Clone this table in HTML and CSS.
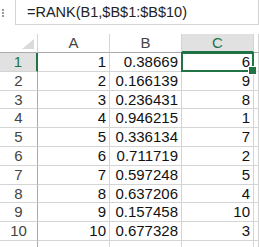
FILE: index.html
```html
<!DOCTYPE html>
<html lang="en">
<head>
    <meta charset="UTF-8">
    <meta name="viewport" content="width=device-width, initial-scale=1.0">
    <title>RANK</title>
    <link rel="stylesheet" href="styles.css">
</head>
<body>
    <div class="formula-bar">
        <span class="grip"></span>
        <div class="formula-input">=RANK(B1,$B$1:$B$10)</div>
    </div>

    <div class="sheet">
        <!-- column headers -->
        <div class="corner"><span class="corner-tri"></span></div>
        <div class="col-head">A</div>
        <div class="col-head">B</div>
        <div class="col-head selected">C</div>
        <div class="col-head"></div>

        <div class="row-head selected">1</div><div class="cell">1</div><div class="cell">0.38669</div><div class="cell active">6</div><div class="cell"></div>
        <div class="row-head">2</div><div class="cell">2</div><div class="cell">0.166139</div><div class="cell">9</div><div class="cell"></div>
        <div class="row-head">3</div><div class="cell">3</div><div class="cell">0.236431</div><div class="cell">8</div><div class="cell"></div>
        <div class="row-head">4</div><div class="cell">4</div><div class="cell">0.946215</div><div class="cell">1</div><div class="cell"></div>
        <div class="row-head">5</div><div class="cell">5</div><div class="cell">0.336134</div><div class="cell">7</div><div class="cell"></div>
        <div class="row-head">6</div><div class="cell">6</div><div class="cell">0.711719</div><div class="cell">2</div><div class="cell"></div>
        <div class="row-head">7</div><div class="cell">7</div><div class="cell">0.597248</div><div class="cell">5</div><div class="cell"></div>
        <div class="row-head">8</div><div class="cell">8</div><div class="cell">0.637206</div><div class="cell">4</div><div class="cell"></div>
        <div class="row-head">9</div><div class="cell">9</div><div class="cell">0.157458</div><div class="cell">10</div><div class="cell"></div>
        <div class="row-head">10</div><div class="cell">10</div><div class="cell">0.677328</div><div class="cell">3</div><div class="cell"></div>
        <div class="row-head"></div><div class="cell"></div><div class="cell"></div><div class="cell"></div><div class="cell"></div>
    </div>
</body>
</html>
```

FILE: styles.css
```css
* {
    box-sizing: border-box;
}

body {
    margin: 0;
    background: #fff;
    font-family: "Liberation Sans", Arial, sans-serif;
    overflow: hidden;
}

/* Formula bar */
.formula-bar {
    display: flex;
    height: 25px;
    margin-bottom: 9px;
}

.grip {
    width: 15px;
    display: flex;
    align-items: center;
    padding-left: 2px;
}

.grip::before {
    content: '';
    width: 0;
    height: 8px;
    border-left: 2px dotted #9a9a9a;
}

.formula-input {
    flex: 1;
    border: 1px solid #d4d4d4;
    border-top: none;
    padding-left: 11px;
    font-size: 14.5px;
    line-height: 24px;
    color: #222;
    white-space: nowrap;
}

/* Grid */
.sheet {
    display: grid;
    grid-template-columns: 38px 72px 72px 72px 1fr;
    grid-template-rows: 19px repeat(10, 18.8px) 18px;
    font-size: 15px;
}

.corner {
    position: relative;
    border-right: 1px solid #d4d4d4;
    border-bottom: 1px solid #ababab;
}

.corner-tri {
    position: absolute;
    right: 3px;
    bottom: 3px;
    width: 0;
    height: 0;
    border-left: 12px solid transparent;
    border-bottom: 10px solid #dadada;
}

.col-head {
    text-align: center;
    color: #444;
    line-height: 18px;
    border-right: 1px solid #d4d4d4;
    border-bottom: 1px solid #ababab;
}

.col-head.selected {
    background: #e1e1e1;
    color: #217346;
    border-bottom: 2px solid #217346;
}

.row-head {
    text-align: center;
    color: #444;
    line-height: 18px;
    border-right: 1px solid #ababab;
    border-bottom: 1px solid #d4d4d4;
}

.row-head.selected {
    background: #e1e1e1;
    color: #217346;
    border-right: 2px solid #217346;
}

.cell {
    text-align: right;
    padding-right: 3px;
    color: #111;
    line-height: 18px;
    border-right: 1px solid #d4d4d4;
    border-bottom: 1px solid #d4d4d4;
    white-space: nowrap;
}

/* Active cell outline and fill handle */
.cell.active {
    position: relative;
}

.cell.active::before {
    content: '';
    position: absolute;
    top: -1px;
    left: -1px;
    right: -1px;
    bottom: -1px;
    border: 2px solid #217346;
}

.cell.active::after {
    content: '';
    position: absolute;
    right: -4px;
    bottom: -4px;
    width: 7px;
    height: 7px;
    background: #217346;
    border: 1px solid #fff;
}
```
